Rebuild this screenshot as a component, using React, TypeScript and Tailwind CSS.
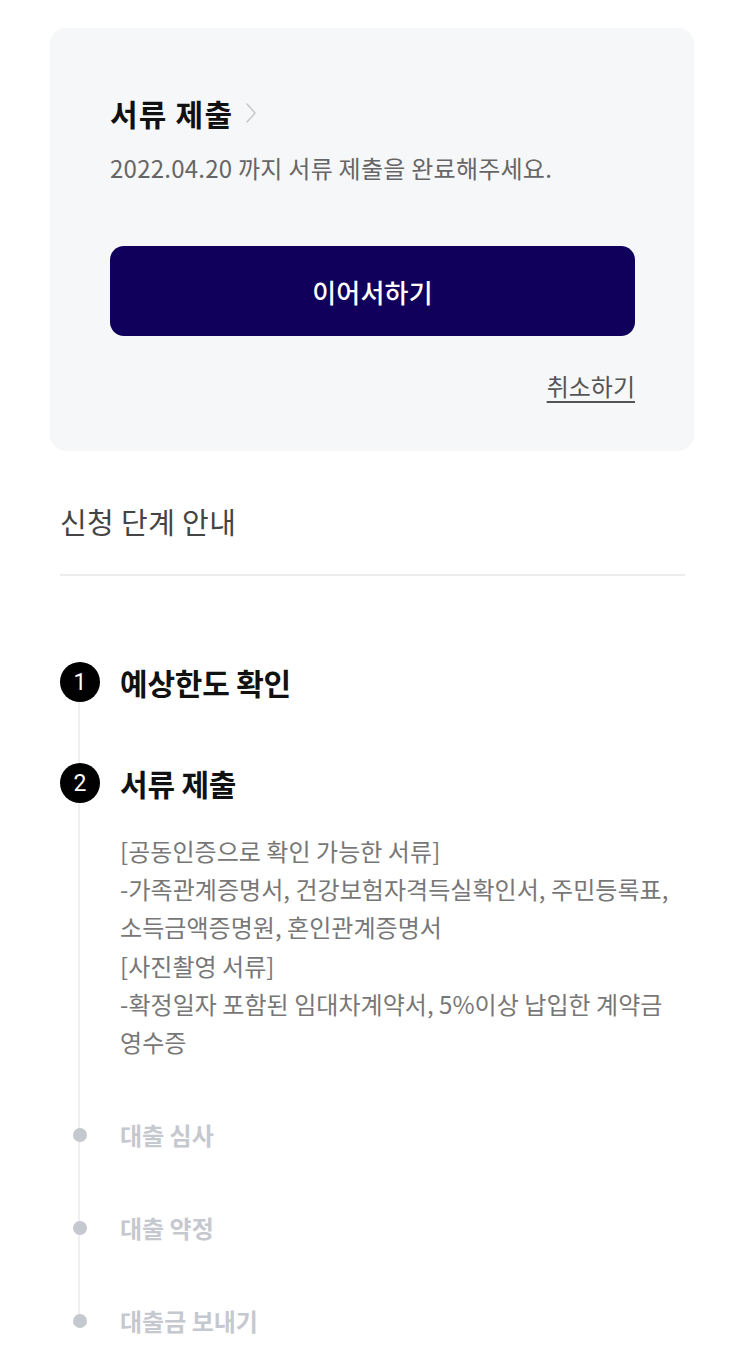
import React from "react";

const font = { fontFamily: '"Noto Sans CJK KR", "Noto Sans", sans-serif' };

function Circle({ n }: { n: number }) {
  return (
    <div className="relative z-10 flex h-[40px] w-[40px] shrink-0 items-center justify-center rounded-full bg-black text-[23px] leading-none text-white">
      <span style={{ fontFamily: 'Roboto, "Noto Sans", sans-serif' }}>{n}</span>
    </div>
  );
}

function GrayStep({ label }: { label: string }) {
  return (
    <div className="flex h-[36px] items-center">
      <div className="flex w-[40px] shrink-0 justify-center">
        <div className="relative z-10 h-[14px] w-[14px] rounded-full bg-[#c6c8cf]" />
      </div>
      <div className="ml-[20px] text-[24px] font-bold leading-[36px] text-[#c6c8cf]">
        {label}
      </div>
    </div>
  );
}

export default function App() {
  const desc = [
    "[공동인증으로 확인 가능한 서류]",
    "-가족관계증명서, 건강보험자격득실확인서, 주민등록표,",
    "소득금액증명원, 혼인관계증명서",
    "[사진촬영 서류]",
    "-확정일자 포함된 임대차계약서, 5%이상 납입한 계약금",
    "영수증",
  ];
  return (
    <div className="min-h-[1358px] w-[743px] bg-white pt-[28px]" style={font}>
      {/* Card */}
      <div className="ml-[50px] w-[644px] rounded-[16px] bg-[#f6f7f9] pb-[50px] pl-[60px] pr-[59px] pt-[65px]">
        <div className="flex items-center">
          <span className="text-[30px] font-bold leading-[40px] tracking-[1.2px] text-[#111]">
            서류 제출
          </span>
          <svg
            className="ml-[12px]"
            width="12"
            height="22"
            viewBox="0 0 12 22"
            fill="none"
          >
            <path
              d="M2 2 L10 11 L2 20"
              stroke="#c9cacd"
              strokeWidth="1.6"
              strokeLinecap="round"
              strokeLinejoin="round"
            />
          </svg>
        </div>
        <div className="mt-[19px] text-[24px] leading-[32px] tracking-[0.25px] text-[#666]">
          2022.04.20 까지 서류 제출을 완료해주세요.
        </div>
        <button className="mt-[62px] flex h-[90px] w-full items-center justify-center rounded-[14px] bg-[#10005c] text-[26px] font-medium tracking-[0.2px] text-white">
          이어서하기
        </button>
        <div className="mt-[35px] flex justify-end">
          <span className="text-[24px] leading-[30px] text-[#555] underline decoration-[1.5px] underline-offset-[5px]">
            취소하기
          </span>
        </div>
      </div>

      {/* Steps section */}
      <div className="ml-[60px] w-[625px]">
        <div className="mt-[52px] text-[29px] leading-[36px] tracking-[0.4px] text-[#444]">
          신청 단계 안내
        </div>
        <div className="mt-[35px] h-[2px] bg-[#ececec]" />

        <div className="relative mt-[86px]">
          <div className="absolute left-[18px] top-[20px] h-[640px] w-[2px] bg-[#efeff1]" />

          <div className="flex h-[40px] items-center">
            <Circle n={1} />
            <div className="ml-[20px] text-[30px] font-bold leading-[40px] tracking-[-0.2px] text-[#111]">
              예상한도 확인
            </div>
          </div>

          <div className="mt-[61px] flex h-[40px] items-center">
            <Circle n={2} />
            <div className="ml-[20px] text-[30px] font-bold leading-[40px] tracking-[-0.2px] text-[#111]">
              서류 제출
            </div>
          </div>

          <div className="ml-[60px] mt-[29px] text-[24px] leading-[38.2px] tracking-[0.05px] text-[#777]">
            {desc.map((l, i) => (
              <div key={i} className="whitespace-nowrap">
                {l}
              </div>
            ))}
          </div>

          <div className="mt-[56px] flex flex-col gap-[57px]">
            <GrayStep label="대출 심사" />
            <GrayStep label="대출 약정" />
            <GrayStep label="대출금 보내기" />
          </div>
        </div>
      </div>
    </div>
  );
}
